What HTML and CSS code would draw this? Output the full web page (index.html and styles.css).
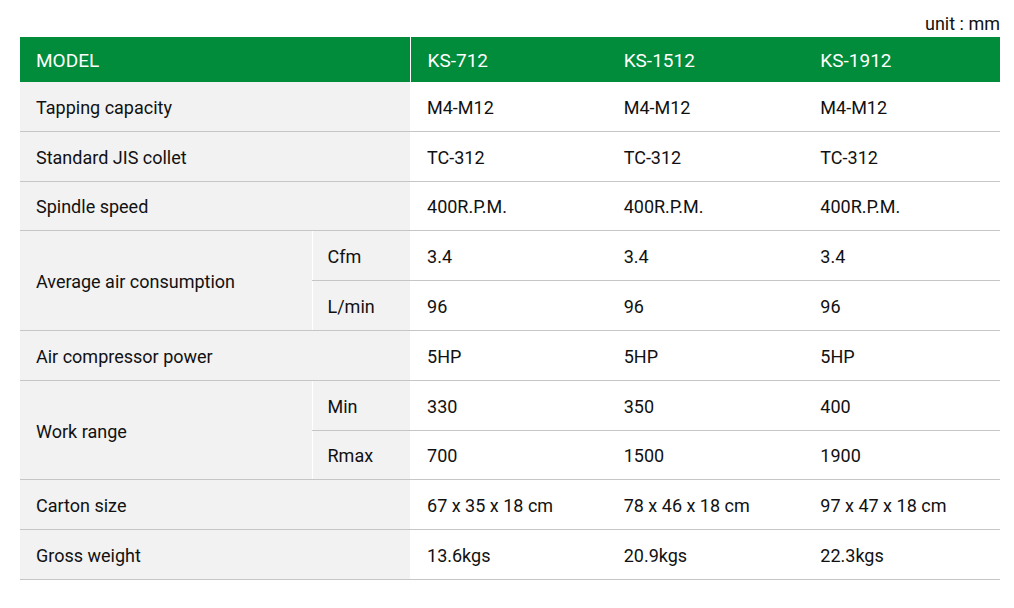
FILE: index.html
```html
<!DOCTYPE html>
<html>
<head>
<meta charset="utf-8">
<link rel="stylesheet" href="styles.css">
</head>
<body>
<div class="wrap">
  <div class="unit">unit : mm</div>
  <table class="spec">
    <colgroup>
      <col class="c-main"><col class="c-sub"><col class="c-data"><col class="c-data"><col class="c-data">
    </colgroup>
    <thead>
      <tr><th colspan="2" class="lab">MODEL</th><th>KS-712</th><th>KS-1512</th><th>KS-1912</th></tr>
    </thead>
    <tbody>
      <tr><td colspan="2" class="lab">Tapping capacity</td><td>M4-M12</td><td>M4-M12</td><td>M4-M12</td></tr>
      <tr><td colspan="2" class="lab">Standard JIS collet</td><td>TC-312</td><td>TC-312</td><td>TC-312</td></tr>
      <tr><td colspan="2" class="lab">Spindle speed</td><td>400R.P.M.</td><td>400R.P.M.</td><td>400R.P.M.</td></tr>
      <tr><td rowspan="2" class="lab">Average air consumption</td><td class="sub">Cfm</td><td>3.4</td><td>3.4</td><td>3.4</td></tr>
      <tr><td class="sub">L/min</td><td>96</td><td>96</td><td>96</td></tr>
      <tr><td colspan="2" class="lab">Air compressor power</td><td>5HP</td><td>5HP</td><td>5HP</td></tr>
      <tr><td rowspan="2" class="lab">Work range</td><td class="sub">Min</td><td>330</td><td>350</td><td>400</td></tr>
      <tr><td class="sub">Rmax</td><td>700</td><td>1500</td><td>1900</td></tr>
      <tr><td colspan="2" class="lab">Carton size</td><td>67 x 35 x 18 cm</td><td>78 x 46 x 18 cm</td><td>97 x 47 x 18 cm</td></tr>
      <tr><td colspan="2" class="lab">Gross weight</td><td>13.6kgs</td><td>20.9kgs</td><td>22.3kgs</td></tr>
    </tbody>
  </table>
</div>
</body>
</html>
```
FILE: styles.css
```css
html, body {
  margin: 0;
  padding: 0;
  background: #fff;
}
body {
  font-family: Roboto, "Liberation Sans", sans-serif;
  color: #111;
}
.wrap {
  padding: 13px 14px 0 20px;
}
.unit {
  text-align: right;
  font-size: 18px;
  line-height: 22px;
  height: 24px;
}
.spec {
  width: 980px;
  border-collapse: collapse;
  table-layout: fixed;
  font-size: 18px;
}
.c-main { width: 292px; }
.c-sub { width: 98px; }
.c-data { width: 196.66px; }
.spec th {
  background: #008c3a;
  color: #fff;
  font-weight: 400;
  text-align: left;
  height: 44px;
  padding: 1px 0 0 17px;
  font-size: 19px;
}
.spec th.lab {
  padding-left: 16px;
  border-right: 1px solid #fff;
}
.spec td {
  height: 46.8px;
  padding: 2px 0 0 17px;
  border-bottom: 1px solid #c6c6c6;
  text-align: left;
  white-space: nowrap;
}
.spec td.lab {
  background: #f2f2f2;
  padding-left: 16px;
}
.spec td.sub {
  background: #f2f2f2;
  border-left: 1px solid #fff;
  padding-left: 15px;
}
```
